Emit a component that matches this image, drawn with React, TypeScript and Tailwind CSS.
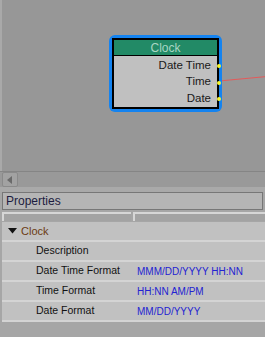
import React from 'react';

const rows = [
    { label: 'Description', value: '' },
    { label: 'Date Time Format', value: 'MMM/DD/YYYY HH:NN' },
    { label: 'Time Format', value: 'HH:NN AM/PM' },
    { label: 'Date Format', value: 'MM/DD/YYYY' },
];

const ports = ['Date Time', 'Time', 'Date'];

const ClockNode = () => {
    return (
        <div className="absolute left-[107px] top-[35px] w-[113px] rounded-[6px] bg-[#1483f0] p-[3px]">
            <div className="border-2 border-black bg-[#c0c0c0]">
                <div className="h-[16px] bg-[#228a66] border-b border-black flex items-center justify-center text-[#a9d6c4] text-[12px] leading-none">
                    Clock
                </div>
                <div className="flex flex-col pt-[1px]">
                    {ports.map((p) => (
                        <div key={p} className="relative h-[16.5px] flex items-center justify-end pr-[6px] text-[11.5px] text-[#1a1a1a] leading-none">
                            {p}
                            <span className="absolute right-[-4px] top-[7px] w-[4px] h-[4px] rounded-full bg-[#f5f530]" />
                        </div>
                    ))}
                </div>
            </div>
        </div>
    );
};

const App = () => {
    return (
        <div className="w-[265px] h-[337px] overflow-hidden flex flex-col bg-[#a6a6a6] font-['Liberation_Sans',Arial,sans-serif]">
            {/* canvas */}
            <div className="relative h-[171px] bg-[#979797] border-l-2 border-[#a9a9a9]">
                <svg className="absolute left-0 top-0" width="265" height="171">
                    <path d="M217 81 L265 76.5" stroke="#e45a5a" strokeWidth="1" fill="none" />
                </svg>
                <ClockNode />
            </div>
            {/* horizontal scrollbar */}
            <div className="h-[16px] flex bg-[#999999] border-t border-[#858585]">
                <div className="ml-[2px] w-[16px] h-full flex items-center justify-center bg-[#a2a2a2] border border-[#8a8a8a] rounded-[2px]">
                    <svg width="6" height="8" viewBox="0 0 6 8">
                        <path d="M5 0 L0 4 L5 8 Z" fill="#6a6a6a" />
                    </svg>
                </div>
                <div className="flex-1" />
            </div>
            <div className="h-[5px] bg-[#a9a9a9]" />
            {/* properties panel */}
            <div className="h-[18px] mx-[2px] flex items-center px-[3px] bg-[#b5b5b5] border border-[#777777] text-[12px] text-[#1c1c40]">
                Properties
            </div>
            <div className="h-[2px]" />
            <div className="h-[9px] flex gap-[2px] pl-[2px]">
                <div className="w-[129px] bg-[#a3a3a3] border-t-2 border-l-2 border-[#d6d6d6]" />
                <div className="flex-1 bg-[#a3a3a3] border-t-2 border-l-2 border-[#d6d6d6]" />
            </div>
            <div className="ml-[2px] mt-[1px] bg-[#c1c1c1] text-[10.5px]">
                <div className="h-[20px] flex items-center border-b-2 border-[#d4d4d4] pl-[6px] gap-[4px] text-[#6b3b12] text-[11px]">
                    <svg width="9" height="6" viewBox="0 0 9 6">
                        <path d="M0 0 L9 0 L4.5 5.5 Z" fill="#111111" />
                    </svg>
                    <span>Clock</span>
                </div>
                {rows.map((r) => (
                    <div key={r.label} className="h-[20px] flex items-center border-b-2 border-[#d4d4d4]">
                        <span className="w-[135px] pl-[34px] text-[#111111]">{r.label}</span>
                        <span className="text-[#2323d2] text-[10px]">{r.value}</span>
                    </div>
                ))}
            </div>
        </div>
    );
};

export default App;
